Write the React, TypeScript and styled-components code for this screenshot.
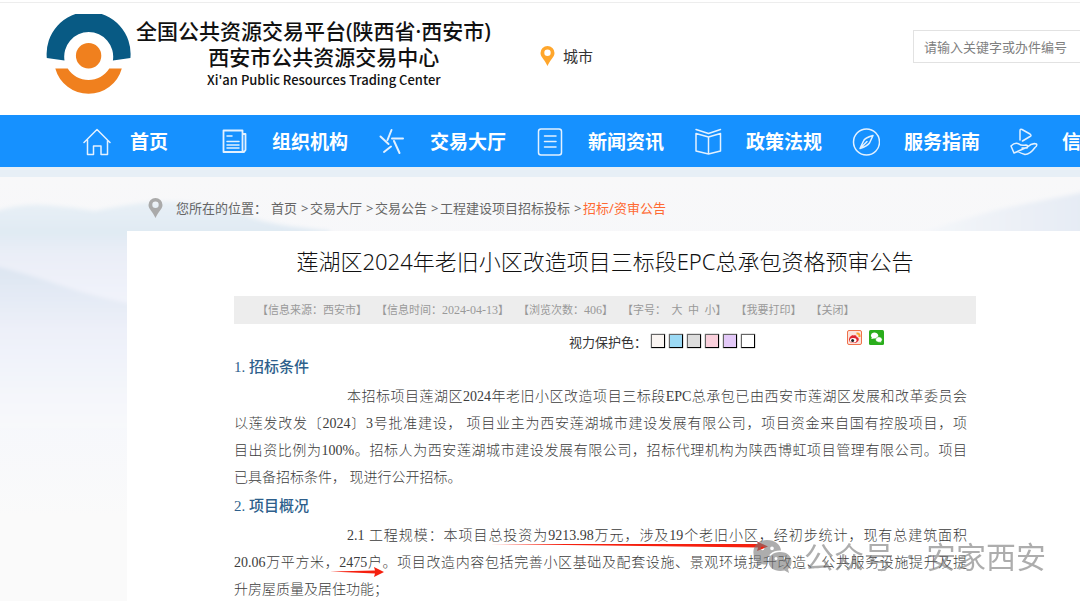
import React from 'react';
import styled, { createGlobalStyle, css } from 'styled-components';

const sans = '"Noto Sans", "Noto Sans CJK SC", sans-serif';
const song = '"Liberation Serif", "Noto Sans CJK SC", serif';

const GlobalStyle = createGlobalStyle`
  *, *::before, *::after { box-sizing: border-box; }
  html, body { margin: 0; }
  body { background: #fafafb; color: #333; font-family: ${sans}; overflow: hidden; }
  h1, h2, p { margin: 0; }
  a { color: inherit; text-decoration: none; }
  button, input { font: inherit; }
`;

const Page = styled.div`
  position: relative;
  height: 100vh;
  overflow: hidden;
  display: flex;
  flex-direction: column;
`;

const Header = styled.header`
  flex: none;
  display: flex;
  align-items: flex-start;
  height: 115px;
  background: #fff;
  border-top: 2px solid #fff;
  box-shadow: inset 0 1px 0 #ededed;
  overflow: hidden;
`;

const Brand = styled.a`
  flex: none;
  display: flex;
  width: 495px;
  padding: 12px 0 0 46px;
  color: #111;
`;

const BrandText = styled.span`
  display: flex;
  flex-direction: column;
  padding: 4px 0 0 5px;
  font-weight: 500;
  white-space: nowrap;
`;

const BrandLine = styled.span`
  font-size: 21px;
  line-height: 26px;
`;

const BrandSubtitle = styled.span`
  display: flex;
  flex-direction: column;
  align-items: center;
  align-self: flex-start;
  padding-left: 71px;
`;

const BrandLatin = styled.span`
  font-family: "Noto Sans CJK SC", sans-serif;
  font-size: 13px;
  line-height: 20px;
`;

const City = styled.a`
  flex: none;
  display: flex;
  align-items: center;
  gap: 8px;
  margin: 42px 0 0 45px;
  font-size: 15px;
  line-height: 24px;
`;

const Search = styled.form`
  flex: none;
  margin: 28px -133px 0 auto;
`;

const SearchInput = styled.input`
  display: block;
  width: 300px;
  height: 33px;
  padding: 0 10px;
  border: 1px solid #e2e2e2;
  background: #fff;
  font-size: 13px;
  outline: none;
  &::placeholder { color: #808080; }
`;

const Nav = styled.nav`
  flex: none;
  display: flex;
  align-items: center;
  gap: 30px;
  height: 52px;
  padding: 2px 0 0 83px;
  background: #1691ff;
  overflow: hidden;
`;

const NavItem = styled.a<{ $home?: boolean }>`
  flex: none;
  display: flex;
  align-items: center;
  gap: ${(p) => (p.$home ? 19 : 24)}px;
  ${(p) => p.$home && css`margin-right: 22px;`}
  color: #fff;
  font-size: 19px;
  font-weight: 700;
  line-height: 28px;
  white-space: nowrap;
`;

const NavGlyph = styled.svg`
  flex: none;
  width: 28px;
  height: 28px;
  fill: none;
  stroke: #e3f1ff;
  stroke-width: 1.5;
  stroke-linejoin: round;
  stroke-linecap: round;
`;

const Strip = styled.div`
  flex: none;
  height: 10px;
  background: #e7eff6;
`;

const Main = styled.main`
  position: relative;
  flex: 1;
  padding-left: 127px;
`;

const Scenery = styled.svg`
  position: absolute;
  inset: 0;
  width: 100%;
  height: 424px;
`;

const Crumbs = styled.nav`
  position: relative;
  display: flex;
  align-items: center;
  height: 54px;
  padding: 7px 0 0 21px;
  color: #666;
  font-size: 13px;
  line-height: 18px;
  white-space: pre;
  svg { flex: none; margin-right: 13px; }
`;

const CrumbLabel = styled.span`
  margin-right: 4px;
`;

const CrumbSeparator = styled.span`
  width: 13px;
  padding-left: 4px;
`;

const Current = styled.a`
  color: #ff6a33;
`;

const Article = styled.article`
  position: relative;
  min-height: 370px;
  padding: 0 104px 0 107px;
  background: #fff;
`;

const Title = styled.h1`
  padding: 13px 0 17px;
  color: #111;
  font-size: 22px;
  font-weight: 300;
  line-height: 35px;
  text-align: center;
  white-space: nowrap;
`;

const Meta = styled.div`
  display: flex;
  align-items: center;
  gap: 9px;
  height: 28px;
  padding-left: 23px;
  background: #ededed;
  color: #999;
  font-family: ${song};
  font-size: 11px;
  line-height: 16px;
  white-space: pre;
`;

const Digits = styled.span`
  font-size: 12px;
`;

const Tools = styled.div`
  display: flex;
  align-items: flex-start;
  height: 28px;
  padding: 6px 92px 0 0;
  justify-content: flex-end;
`;

const ToolLabel = styled.span`
  margin-right: 4px;
  font-size: 13px;
  line-height: 25px;
`;

const Swatches = styled.div`
  display: flex;
  gap: 4px;
  padding-top: 4px;
  margin-right: 92px;
`;

const Swatch = styled.button<{ $color: string }>`
  width: 14px;
  height: 14px;
  padding: 0;
  border: 1px solid;
  border-color: #666 #000 #000 #666;
  background: ${(p) => p.$color};
  box-shadow: 0 0 1px #555;
`;

const Share = styled.div`
  display: flex;
  gap: 7px;
`;

const ShareButton = styled.button`
  width: 15px;
  height: 15px;
  padding: 0;
  border: 0;
  background: none;
  svg { display: block; }
`;

const Heading = styled.h2`
  color: #2e5f8c;
  font-family: ${song};
  font-size: 15px;
  font-weight: 500;
  line-height: 31px;
`;

const Paragraph = styled.p`
  position: relative;
  max-width: 733px;
  color: #3c3c3c;
  font-family: ${song};
  font-size: 14px;
  font-weight: 300;
  line-height: 27px;
`;

const Line = styled.span<{ $first?: boolean; $last?: boolean }>`
  display: block;
  padding-left: ${(p) => (p.$first ? 113 : 0)}px;
  text-align: justify;
  text-align-last: ${(p) => (p.$last ? 'left' : 'justify')};
  white-space: nowrap;
`;

const Arrow = styled.svg<{ $x: number; $y: number }>`
  position: absolute;
  left: ${(p) => p.$x}px;
  top: ${(p) => p.$y}px;
`;

const Watermark = styled.div`
  position: absolute;
  right: 34px;
  bottom: 22px;
  display: flex;
  align-items: center;
  gap: 12px;
  color: #777;
  opacity: 0.6;
  font-size: 30px;
  line-height: 44px;
  white-space: nowrap;
`;

const Pin = ({ color }: { color: string }) => (
  <svg width="15" height="20" viewBox="0 0 15 20" aria-hidden="true">
    <path
      fill={color}
      fillRule="evenodd"
      d="M7.500 0A7 7 0 0 1 14.500 7C14.500 11 10 14 7.500 20C5 14 .5 11 .5 7A7 7 0 0 1 7.500 0ZM7.500 3.600A3.200 3.200 0 1 0 7.500 10A3.200 3.200 0 1 0 7.500 3.600Z"
    />
  </svg>
);

const Logo = () => (
  <svg width="85" height="82" viewBox="0 0 85 82" aria-hidden="true">
    <path fill="#085a84" d="M.8 44A42 42 0 1 1 84.400 44L66.900 46.400A24.500 24.500 0 1 0 18.500 46.400Z" />
    <path fill="#f0801e" d="M9.300 54.500H21.700A24.600 24.600 0 0 0 63.300 54.500H75.800A34.500 34.500 0 0 1 9.300 54.500Z" />
    <circle cx="42.600" cy="41.700" r="12.700" fill="#f0801e" />
  </svg>
);

const navItems: { label: string; icon: React.ReactNode }[] = [
  {
    label: '首页',
    icon: <path d="M1 14.500 14 1.500 27 14.500M4.500 12V26.500H10.500V18H18V26.500H24.500V12" />,
  },
  {
    label: '组织机构',
    icon: (
      <>
        <path strokeWidth="1.800" d="M22.500 2.500H3.500V24H24L25.500 22V6H22.500V2.500V22Q22.500 24 24 24" />
        <path d="M7 8H12M7 13.500H19M7 17H19M7 20H19" />
      </>
    ),
  },
  {
    label: '交易大厅',
    icon: <path strokeWidth="2" d="M13.500 2 9.500 12M14 10.500H25M16 13 21.500 25M13 18.500 6 24M10.500 16 2.500 8.500" />,
  },
  {
    label: '新闻资讯',
    icon: (
      <>
        <rect x="2.500" y="1" width="23" height="26" rx="2.500" />
        <path d="M8.500 8H20M8.500 13.500H20M8.500 19H20" />
      </>
    ),
  },
  {
    label: '政策法规',
    icon: <path d="M14.500 9 2 5.500V23L14.500 26L26.500 23V5.500L14.500 9V26M2 1.500 14.500 5.500 26.500 1.500" />,
  },
  {
    label: '服务指南',
    icon: (
      <>
        <circle cx="14.500" cy="14" r="13" />
        <path d="M21 7.500Q12.500 10 11.500 13L8 20.500Q15.500 18 17.500 15ZM8 20.500 15 13.500" />
      </>
    ),
  },
  {
    label: '信',
    icon: (
      <path d="M10 12V3Q10 .5 12 1.500L20 6Q22 7.500 20 8.500L12.500 13M1 18Q5 14 9 16Q11 18 16 17Q19 17.500 17 20H12M17.500 19Q22 14.500 26.500 16Q27.500 17.500 25 19.500Q20 26.500 15 26.500Q10 25 8 23.500L4 25ZM1 18 4 25" />
    ),
  },
];

const crumbs = ['首页', '交易大厅', '交易公告', '工程建设项目招标投标'];

const swatches: [string, string][] = [
  ['米白', '#faf5f2'],
  ['天蓝', '#9cdaf5'],
  ['浅灰', '#dddddd'],
  ['粉红', '#fad0dc'],
  ['淡紫', '#e3c9f8'],
  ['白色', '#ffffff'],
];

export default function App() {
  return (
    <Page>
      <GlobalStyle />
      <Header>
        <Brand href="#">
          <Logo />
          <BrandText>
            <BrandLine>全国公共资源交易平台(陕西省·西安市)</BrandLine>
            <BrandSubtitle>
              <BrandLine>西安市公共资源交易中心</BrandLine>
              <BrandLatin>Xi'an Public Resources Trading Center</BrandLatin>
            </BrandSubtitle>
          </BrandText>
        </Brand>
        <City href="#">
          <Pin color="#ffa62b" />
          城市
        </City>
        <Search role="search">
          <SearchInput type="text" aria-label="搜索" placeholder="请输入关键字或办件编号" />
        </Search>
      </Header>

      <Nav>
        {navItems.map((item, i) => (
          <NavItem key={item.label} href="#" $home={i === 0}>
            <NavGlyph viewBox="0 0 28 28" aria-hidden="true">{item.icon}</NavGlyph>
            {item.label}
          </NavItem>
        ))}
      </Nav>
      <Strip />

      <Main>
        <Scenery viewBox="0 0 1080 424" preserveAspectRatio="none" aria-hidden="true">
          <defs>
            <linearGradient id="sky" x1="0" y1="0" x2="0" y2="1">
              <stop offset="0" stopColor="#f8f8f9" />
              <stop offset="0.5" stopColor="#f5f7fc" />
              <stop offset="0.8" stopColor="#fafafa" />
            </linearGradient>
            <linearGradient id="far" x1="0" y1="0" x2="0" y2="1">
              <stop offset="0" stopColor="#e8f0f6" />
              <stop offset="0.3" stopColor="#e0eaf3" />
              <stop offset="0.5" stopColor="#eaeef7" />
              <stop offset="1" stopColor="#f2f4fb" />
            </linearGradient>
            <linearGradient id="near" x1="0" y1="0" x2="0" y2="1">
              <stop offset="0" stopColor="#dce5f1" />
              <stop offset="0.4" stopColor="#edf0f9" />
              <stop offset="1" stopColor="#f8f9fb" />
            </linearGradient>
            <linearGradient id="east" x1="0" y1="0" x2="1" y2="0">
              <stop offset="0" stopColor="#f5f7fa" />
              <stop offset="1" stopColor="#e5ebf4" />
            </linearGradient>
            <filter id="mist"><feGaussianBlur stdDeviation="2" /></filter>
          </defs>
          <rect width="1080" height="424" fill="url(#sky)" />
          <g filter="url(#mist)">
            <path fill="url(#far)" d="M-9 36Q18 26 45 28T95 34Q150 22 180 25Q225 28 245 38T330 54V130H-9Z" />
            <path fill="url(#near)" d="M-9 88Q20 94 60 108T150 130V250H-9Z" />
            <path fill="url(#east)" d="M915 58Q980 36 1010 30T1090 14V60H915Z" />
          </g>
        </Scenery>
        <Crumbs aria-label="当前位置">
          <Pin color="#aaa" />
          <CrumbLabel>您所在的位置：</CrumbLabel>
          {crumbs.map((name) => (
            <React.Fragment key={name}>
              <a href="#">{name}</a>
              <CrumbSeparator>&gt;</CrumbSeparator>
            </React.Fragment>
          ))}
          <Current href="#">招标/资审公告</Current>
        </Crumbs>

        <Article>
          <Title>莲湖区2024年老旧小区改造项目三标段EPC总承包资格预审公告</Title>
          <Meta>
            <span>【信息来源：西安市】</span>
            <span>
              【信息时间：<Digits>2024-04-13</Digits>】
            </span>
            <span>
              【浏览次数：<Digits>406</Digits>】
            </span>
            <span>
              【字号：  <a href="#">大</a>  <a href="#">中</a>  <a href="#">小</a>】
            </span>
            <a href="#">【我要打印】</a>
            <a href="#">【关闭】</a>
          </Meta>
          <Tools>
            <ToolLabel>视力保护色：</ToolLabel>
            <Swatches>
              {swatches.map(([name, color]) => (
                <Swatch key={name} type="button" aria-label={name} $color={color} />
              ))}
            </Swatches>
            <Share>
              <ShareButton type="button" aria-label="微博">
                <svg width="15" height="15" viewBox="0 0 15 15">
                  <rect x=".5" y=".5" width="14" height="14" rx="1.500" fill="#fbe3dc" stroke="#f0714a" />
                  <path fill="#e0262c" d="M2 10C2 7 5 4.500 6.500 5.500 9 4.500 10 6 9.500 7 12 7.500 12 9 11.500 10.500 10 14 2 14 2 10Z" />
                  <ellipse cx="6.200" cy="10.300" rx="3.300" ry="2.300" fill="#fff" />
                  <circle cx="5.600" cy="10.500" r="1.500" fill="#222" />
                  <path fill="none" stroke="#f9a12c" strokeWidth="2" d="M9.500 3.500Q13 3 12.500 7" />
                </svg>
              </ShareButton>
              <ShareButton type="button" aria-label="微信">
                <svg width="15" height="15" viewBox="0 0 15 15">
                  <rect width="15" height="15" rx="1.500" fill="#2aad1c" />
                  <path fill="#fff" d="M2.300 9 2.800 7.500A3.700 3 0 1 1 5 8.500Z" />
                  <path fill="#fff" stroke="#2aad1c" strokeWidth=".5" d="M12.300 12.800 12.200 11.500A3.300 2.700 0 1 0 10.600 12.200Z" />
                </svg>
              </ShareButton>
            </Share>
          </Tools>

          <Heading>1. 招标条件</Heading>
          <Paragraph>
            <Line $first>本招标项目莲湖区2024年老旧小区改造项目三标段EPC总承包已由西安市莲湖区发展和改革委员会</Line>
            <Line>以莲发改发〔2024〕3号批准建设， 项目业主为西安莲湖城市建设发展有限公司，项目资金来自国有控股项目，项</Line>
            <Line>目出资比例为100%。招标人为西安莲湖城市建设发展有限公司，招标代理机构为陕西博虹项目管理有限公司。项目</Line>
            <Line $last>已具备招标条件， 现进行公开招标。</Line>
          </Paragraph>
          <Heading>2. 项目概况</Heading>
          <Paragraph>
            <Line $first>2.1 工程规模：本项目总投资为9213.98万元，涉及19个老旧小区，经初步统计，现有总建筑面积</Line>
            <Line>20.06万平方米，2475户。项目改造内容包括完善小区基础及配套设施、景观环境提升改造、公共服务设施提升及提</Line>
            <Line $last>升房屋质量及居住功能；</Line>
            <Arrow $x={256} $y={18} width="278" height="12" viewBox="0 0 278 12" aria-hidden="true">
              <path fill="#f5200f" d="M0 4 268 4 267 1.500 278 6.500 267 11 268 7.500Z" />
            </Arrow>
            <Arrow $x={96} $y={44} width="54" height="12" viewBox="0 0 54 12" aria-hidden="true">
              <path fill="#f5200f" d="M0 5.500 45 4.500 44 1 54 6 44 11 45 7.500Z" />
            </Arrow>
          </Paragraph>
        </Article>
      </Main>

      <Watermark>
        <svg width="39" height="34" viewBox="0 0 39 34" aria-hidden="true">
          <path
            fill="currentColor"
            fillRule="evenodd"
            d="M14 0C22 0 27.500 4.500 28 10.500 19 10 12.500 16 14 24.500 12 24.700 10.500 24.500 9 24L4 27 5 22.500C-3 16 -1 0 14 0ZM9.500 6.500A1.800 1.800 0 1 0 9.500 10.200 1.800 1.800 0 1 0 9.500 6.500ZM19 6.500A1.800 1.800 0 1 0 19 10.200 1.800 1.800 0 1 0 19 6.500Z"
          />
          <path
            fill="currentColor"
            fillRule="evenodd"
            d="M27 12C35 12 38.500 17 38.500 21.500 38.500 25 37 27.500 35 29L36 33 31.500 30.500C23 32.500 15.500 28 15.500 21.500 15.500 16 20.500 12 27 12ZM23 17A1.500 1.500 0 1 0 23 20 1.500 1.500 0 1 0 23 17ZM31 17A1.500 1.500 0 1 0 31 20 1.500 1.500 0 1 0 31 17Z"
          />
        </svg>
        <span>公众号</span>
        <span>·</span>
        <span>安家西安</span>
      </Watermark>
    </Page>
  );
}
